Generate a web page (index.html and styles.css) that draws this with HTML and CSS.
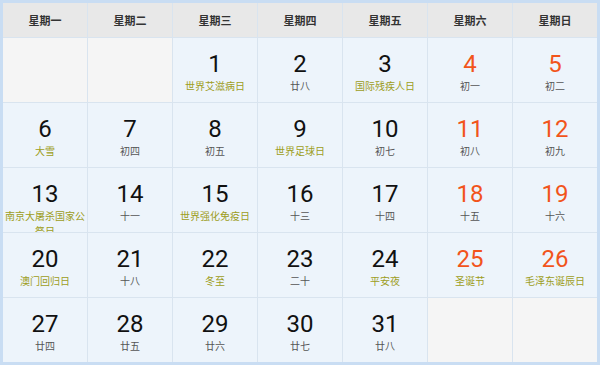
FILE: index.html
```html
<!DOCTYPE html>
<html lang="zh-CN">
<head>
<meta charset="utf-8">
<title>日历</title>
<link rel="stylesheet" href="styles.css">
</head>
<body>
<div class="cal">
  <div class="grid">
    <div class="hd">星期一</div>
    <div class="hd">星期二</div>
    <div class="hd">星期三</div>
    <div class="hd">星期四</div>
    <div class="hd">星期五</div>
    <div class="hd">星期六</div>
    <div class="hd">星期日</div>

    <div class="cell empty"></div>
    <div class="cell empty"></div>
    <div class="cell"><div class="num">1</div><div class="sub fest">世界艾滋病日</div></div>
    <div class="cell"><div class="num">2</div><div class="sub">廿八</div></div>
    <div class="cell"><div class="num">3</div><div class="sub fest">国际残疾人日</div></div>
    <div class="cell wk"><div class="num">4</div><div class="sub">初一</div></div>
    <div class="cell wk"><div class="num">5</div><div class="sub">初二</div></div>

    <div class="cell"><div class="num">6</div><div class="sub fest">大雪</div></div>
    <div class="cell"><div class="num">7</div><div class="sub">初四</div></div>
    <div class="cell"><div class="num">8</div><div class="sub">初五</div></div>
    <div class="cell"><div class="num">9</div><div class="sub fest">世界足球日</div></div>
    <div class="cell"><div class="num">10</div><div class="sub">初七</div></div>
    <div class="cell wk"><div class="num">11</div><div class="sub">初八</div></div>
    <div class="cell wk"><div class="num">12</div><div class="sub">初九</div></div>

    <div class="cell"><div class="num">13</div><div class="sub fest">南京大屠杀国家公祭日</div></div>
    <div class="cell"><div class="num">14</div><div class="sub">十一</div></div>
    <div class="cell"><div class="num">15</div><div class="sub fest">世界强化免疫日</div></div>
    <div class="cell"><div class="num">16</div><div class="sub">十三</div></div>
    <div class="cell"><div class="num">17</div><div class="sub">十四</div></div>
    <div class="cell wk"><div class="num">18</div><div class="sub">十五</div></div>
    <div class="cell wk"><div class="num">19</div><div class="sub">十六</div></div>

    <div class="cell"><div class="num">20</div><div class="sub fest">澳门回归日</div></div>
    <div class="cell"><div class="num">21</div><div class="sub">十八</div></div>
    <div class="cell"><div class="num">22</div><div class="sub fest">冬至</div></div>
    <div class="cell"><div class="num">23</div><div class="sub">二十</div></div>
    <div class="cell"><div class="num">24</div><div class="sub fest">平安夜</div></div>
    <div class="cell wk"><div class="num">25</div><div class="sub fest">圣诞节</div></div>
    <div class="cell wk"><div class="num">26</div><div class="sub fest">毛泽东诞辰日</div></div>

    <div class="cell"><div class="num">27</div><div class="sub">廿四</div></div>
    <div class="cell"><div class="num">28</div><div class="sub">廿五</div></div>
    <div class="cell"><div class="num">29</div><div class="sub">廿六</div></div>
    <div class="cell"><div class="num">30</div><div class="sub">廿七</div></div>
    <div class="cell"><div class="num">31</div><div class="sub">廿八</div></div>
    <div class="cell empty"></div>
    <div class="cell empty"></div>
  </div>
</div>
</body>
</html>
```
FILE: styles.css
```css
html, body {
  margin: 0;
  padding: 0;
  background: #ffffff;
}
.cal {
  width: 600px;
  height: 365px;
  box-sizing: border-box;
  border: 3px solid #c9ddf3;
  background: #d9e4ef;
  font-family: Roboto, "Noto Sans CJK SC", sans-serif;
}
.grid {
  display: grid;
  grid-template-columns: repeat(7, 1fr);
  grid-template-rows: 34px repeat(4, 64px) 1fr;
  gap: 1px;
  height: 100%;
}
.hd {
  background: #e8e8e8;
  display: flex;
  align-items: center;
  justify-content: center;
  font-family: "Noto Sans CJK SC", sans-serif;
  font-size: 11px;
  font-weight: bold;
  color: #333333;
}
.cell {
  background: #edf4fb;
  overflow: hidden;
  text-align: center;
  padding-top: 12px;
  box-sizing: border-box;
}
.cell.empty {
  background: #f5f5f5;
}
.num {
  font-family: Roboto, sans-serif;
  font-size: 24px;
  line-height: 28px;
  color: #111111;
}
.wk .num {
  color: #f2541b;
}
.sub {
  font-family: "Noto Sans CJK SC", sans-serif;
  font-size: 10px;
  line-height: 15px;
  color: #555555;
}
.sub.fest {
  color: #9d9d1c;
}
```
